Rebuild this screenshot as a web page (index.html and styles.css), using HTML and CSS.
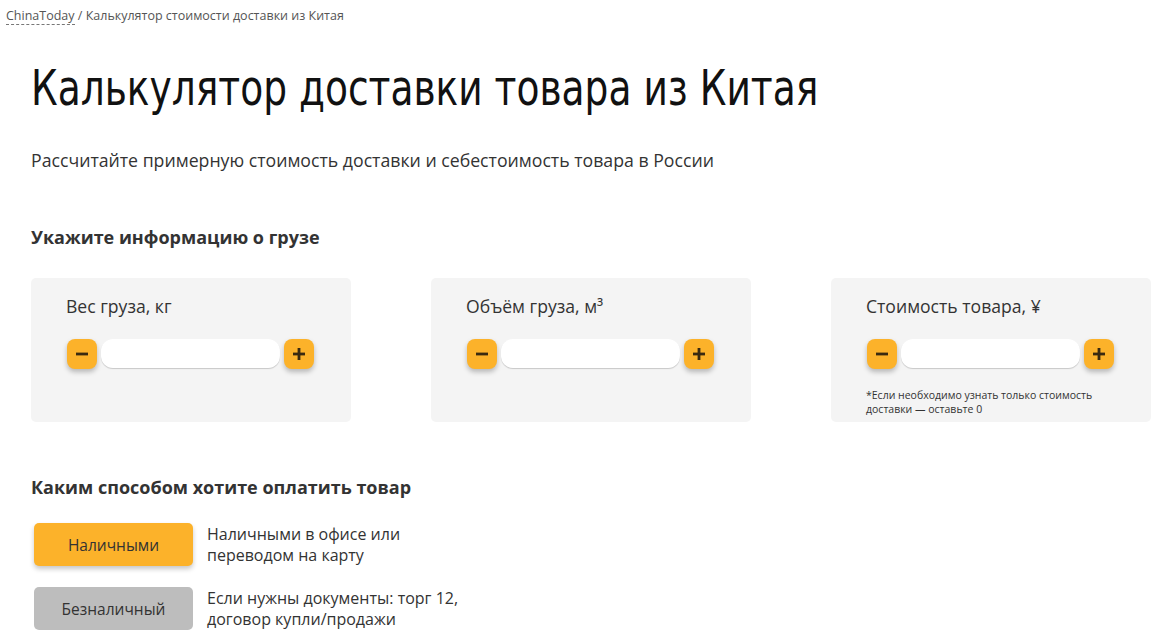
FILE: index.html
```html
<!DOCTYPE html>
<html lang="ru">
<head>
<meta charset="utf-8">
<title>Калькулятор доставки товара из Китая</title>
<link rel="stylesheet" href="styles.css">
</head>
<body>
<div class="crumbs"><a class="crumb-link" href="#">ChinaToday</a> / Калькулятор стоимости доставки из Китая</div>
<main class="page">
  <h1 class="title">Калькулятор доставки товара из Китая</h1>
  <p class="lead">Рассчитайте примерную стоимость доставки и себестоимость товара в России</p>

  <h2 class="section-title">Укажите информацию о грузе</h2>
  <div class="cards">
    <div class="card">
      <div class="card-label">Вес груза, кг</div>
      <div class="stepper">
        <button class="step-btn" type="button"><svg viewBox="0 0 14 14" width="14" height="14"><rect x="1" y="5.6" width="12" height="2.8" fill="#3a2a10"/></svg></button>
        <input class="step-input" type="text">
        <button class="step-btn" type="button"><svg viewBox="0 0 14 14" width="14" height="14"><rect x="1" y="5.6" width="12" height="2.8" fill="#3a2a10"/><rect x="5.6" y="1" width="2.8" height="12" fill="#3a2a10"/></svg></button>
      </div>
    </div>
    <div class="card">
      <div class="card-label">Объём груза, м³</div>
      <div class="stepper">
        <button class="step-btn" type="button"><svg viewBox="0 0 14 14" width="14" height="14"><rect x="1" y="5.6" width="12" height="2.8" fill="#3a2a10"/></svg></button>
        <input class="step-input" type="text">
        <button class="step-btn" type="button"><svg viewBox="0 0 14 14" width="14" height="14"><rect x="1" y="5.6" width="12" height="2.8" fill="#3a2a10"/><rect x="5.6" y="1" width="2.8" height="12" fill="#3a2a10"/></svg></button>
      </div>
    </div>
    <div class="card">
      <div class="card-label">Стоимость товара, ¥</div>
      <div class="stepper">
        <button class="step-btn" type="button"><svg viewBox="0 0 14 14" width="14" height="14"><rect x="1" y="5.6" width="12" height="2.8" fill="#3a2a10"/></svg></button>
        <input class="step-input" type="text">
        <button class="step-btn" type="button"><svg viewBox="0 0 14 14" width="14" height="14"><rect x="1" y="5.6" width="12" height="2.8" fill="#3a2a10"/><rect x="5.6" y="1" width="2.8" height="12" fill="#3a2a10"/></svg></button>
      </div>
      <div class="card-note">*Если необходимо узнать только стоимость<br>доставки — оставьте 0</div>
    </div>
  </div>

  <h2 class="section-title pay-title">Каким способом хотите оплатить товар</h2>
  <div class="pay-list">
    <div class="pay-row">
      <button class="pay-btn pay-btn-active" type="button">Наличными</button>
      <div class="pay-desc">Наличными в офисе или<br>переводом на карту</div>
    </div>
    <div class="pay-row">
      <button class="pay-btn" type="button">Безналичный</button>
      <div class="pay-desc">Если нужны документы: торг 12,<br>договор купли/продажи</div>
    </div>
  </div>
</main>
</body>
</html>
```
FILE: styles.css
```css
html, body {
  margin: 0;
  padding: 0;
  background: #fff;
}
body {
  font-family: "Open Sans", "Noto Sans", "Liberation Sans", sans-serif;
  color: #333;
  overflow: hidden;
}
.crumbs {
  padding: 6px 0 0 6px;
  font-size: 12.5px;
  line-height: 20px;
  color: #555;
}
.crumb-link {
  color: #555;
  text-decoration: none;
  border-bottom: 1px dashed #777;
}
.page {
  padding-left: 31px;
}
.title {
  margin: 31px 0 0;
  font-family: "DejaVu Sans Condensed", "DejaVu Sans", sans-serif;
  font-weight: 400;
  font-size: 50px;
  line-height: 62px;
  color: #111;
  white-space: nowrap;
  transform: scaleX(0.835);
  transform-origin: left center;
}
.lead {
  margin: 29px 0 0;
  font-size: 17.7px;
  line-height: 24px;
  color: #333;
}
.section-title {
  margin: 51px 0 0;
  font-size: 18px;
  line-height: 28px;
  font-weight: 700;
  color: #333;
}
.cards {
  margin-top: 27px;
  display: flex;
  gap: 80px;
}
.card {
  width: 320px;
  height: 144px;
  box-sizing: border-box;
  padding: 16px 35px 0;
  background: #f4f4f4;
  border-radius: 5px;
}
.card-label {
  font-size: 17.6px;
  line-height: 24px;
  color: #333;
}
.stepper {
  margin-top: 21px;
  display: flex;
  align-items: center;
  gap: 4px;
  margin-left: 1px;
}
.step-btn {
  width: 30px;
  height: 30px;
  padding: 0;
  border: 0;
  border-radius: 8px;
  background: #fcb22a;
  box-shadow: 0 3px 5px rgba(0, 0, 0, 0.25);
  display: flex;
  align-items: center;
  justify-content: center;
}
.step-input {
  width: 179px;
  height: 29px;
  box-sizing: border-box;
  border: 0;
  border-radius: 12px;
  background: #fff;
  box-shadow: 0 1px 1px rgba(0, 0, 0, 0.18);
  margin-top: -2px;
}
.card-note {
  margin-top: 19px;
  font-size: 10.5px;
  line-height: 14px;
  color: #333;
}
.pay-title {
  margin-top: 51px;
}
.pay-list {
  margin-top: 22px;
  margin-left: 3px;
  display: flex;
  flex-direction: column;
  gap: 21px;
}
.pay-row {
  display: flex;
  align-items: center;
  gap: 14px;
}
.pay-btn {
  width: 159px;
  height: 43px;
  border: 0;
  border-radius: 5px;
  background: #bdbdbd;
  font-family: "Open Sans", "Noto Sans", "Liberation Sans", sans-serif;
  font-size: 15.5px;
  color: #333;
}
.pay-btn-active {
  background: #fcb22a;
  box-shadow: 0 3px 5px rgba(0, 0, 0, 0.22);
}
.pay-desc {
  font-size: 16px;
  line-height: 21px;
  color: #333;
}
```
